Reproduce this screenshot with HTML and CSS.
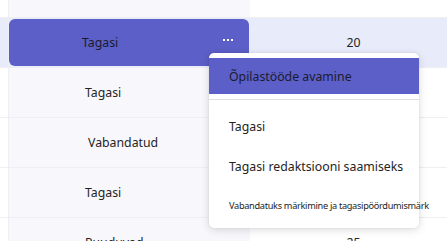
FILE: index.html
```html
<!DOCTYPE html>
<html lang="en">
<head>
  <meta charset="UTF-8">
  <meta name="viewport" content="width=device-width, initial-scale=1.0">
  <title>Hinded</title>
  <link rel="stylesheet" href="styles.css">
</head>
<body>
  <div class="grid">
    <div class="row row-top">
      <div class="cell edge"></div>
      <div class="cell status"></div>
      <div class="cell points"></div>
    </div>
    <div class="row row-active">
      <div class="cell edge"></div>
      <div class="cell status">
        <div class="pill">
          <span class="label shift-left">Tagasi</span>
          <svg class="more" width="10" height="2" viewBox="0 0 10 2">
            <rect x="0" y="0" width="2" height="2" fill="#ffffff"/>
            <rect x="4" y="0" width="2" height="2" fill="#ffffff"/>
            <rect x="8" y="0" width="2" height="2" fill="#ffffff"/>
          </svg>
        </div>
      </div>
      <div class="cell points">20</div>
    </div>
    <div class="row">
      <div class="cell edge"></div>
      <div class="cell status"><span class="label">Tagasi</span></div>
      <div class="cell points"></div>
    </div>
    <div class="row">
      <div class="cell edge"></div>
      <div class="cell status"><span class="label shift-right">Vabandatud</span></div>
      <div class="cell points"></div>
    </div>
    <div class="row">
      <div class="cell edge"></div>
      <div class="cell status"><span class="label">Tagasi</span></div>
      <div class="cell points"></div>
    </div>
    <div class="row">
      <div class="cell edge"></div>
      <div class="cell status"><span class="label">Puuduvad</span></div>
      <div class="cell points">25</div>
    </div>
  </div>

  <div class="menu">
    <div class="menu-item selected">Õpilastööde avamine</div>
    <div class="menu-divider"></div>
    <div class="menu-item">Tagasi</div>
    <div class="menu-item">Tagasi redaktsiooni saamiseks</div>
    <div class="menu-item small">Vabandatuks märkimine ja tagasipöördumismärk</div>
  </div>
</body>
</html>
```

FILE: styles.css
```css
body {
  margin: 0;
  font-family: "Noto Sans", "Open Sans", sans-serif;
  font-size: 12.3px;
  color: #242424;
  background: #ffffff;
  overflow: hidden;
  height: 241px;
}
.grid {
  display: flex;
  flex-direction: column;
}
.row {
  display: grid;
  grid-template-columns: 9px 241px 197px;
  height: 50px;
  border-bottom: 1px solid #efeff3;
  box-sizing: border-box;
}
.row-top {
  height: 18px;
}
.cell {
  display: flex;
  align-items: center;
}
.edge {
  border-right: 1px solid #efeff3;
  box-sizing: border-box;
}
.status {
  background: #f8f8fc;
  padding-left: 76px;
}
.points {
  justify-content: center;
  padding-left: 10px;
}
.row-active .edge,
.row-active .points {
  background: #e8ebfa;
}
.row-active .status {
  padding: 1px 1px 1px 0;
  background: #e8ebfa;
}
.pill {
  flex: 1;
  align-self: stretch;
  display: flex;
  align-items: center;
  justify-content: space-between;
  background: #5b5fc7;
  border-radius: 6px;
  padding: 0 16px 0 74px;
}
.pill .label {
  color: #1b1b2e;
}
.more {
  margin-top: -5px;
}
.shift-left {
  margin-left: -1px;
}
.shift-right {
  margin-left: 3px;
}
.menu {
  position: absolute;
  left: 209px;
  top: 53px;
  width: 210px;
  height: 175px;
  background: #ffffff;
  border-radius: 5px;
  box-shadow: 0 2px 8px rgba(0, 0, 0, 0.14), 0 0 2px rgba(0, 0, 0, 0.1);
  padding-top: 5px;
  box-sizing: border-box;
}
.menu-item {
  height: 40px;
  display: flex;
  align-items: center;
  padding-left: 20px;
  white-space: nowrap;
}
.menu-item.selected {
  height: 36px;
  background: #5b5fc7;
  color: #1b1b2e;
}
.menu-divider {
  height: 1px;
  background: #e0e0e0;
  margin: 5px 0 6px;
}
.menu-item.small {
  height: 38px;
  font-size: 9.2px;
  letter-spacing: -0.3px;
}
```
